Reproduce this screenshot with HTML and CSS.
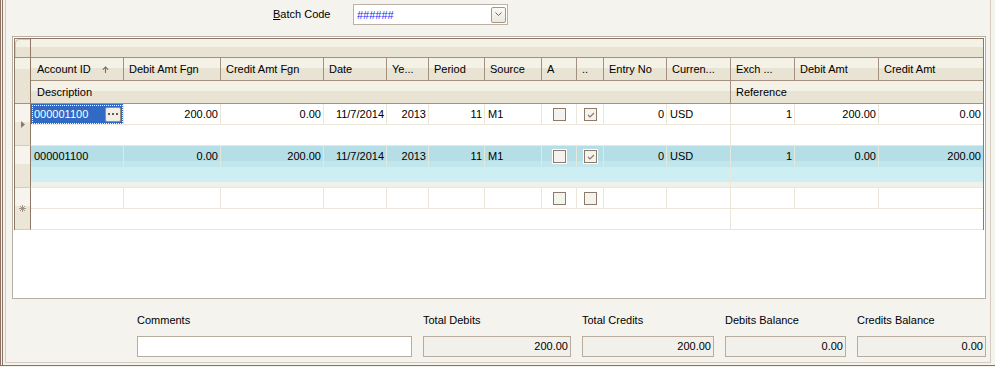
FILE: index.html
```html
<!DOCTYPE html>
<html lang="en">
<head>
    <meta charset="UTF-8">
    <title>Journal Entry</title>
    <link rel="stylesheet" href="styles.css">
</head>
<body>
  <div class="window">
    <div class="panel">
      <div class="topbar">
        <label class="batch-label" for="batch"><u>B</u>atch Code</label>
        <div class="combo" id="batch">
          <span class="combo-text">######</span>
          <span class="combo-btn">
            <svg width="7" height="5" viewBox="0 0 7 5"><polyline points="0.5,0.5 3.5,3.5 6.5,0.5" fill="none" stroke="#6f6254" stroke-width="1"/></svg>
          </span>
        </div>
      </div>

      <div class="grid-frame">
        <div class="grid">
          <!-- header -->
          <div class="cols head">
            <div class="band-sel"></div>
            <div class="band"></div>
            <div class="head-sel"></div>
            <div class="hcell">Account ID
              <svg class="sort" width="7" height="7" viewBox="0 0 7 7"><path d="M3.5 1 V7 M0.8 3.7 L3.5 1 L6.2 3.7" fill="none" stroke="#7d6d60" stroke-width="1.1"/></svg>
            </div>
            <div class="hcell">Debit Amt Fgn</div>
            <div class="hcell">Credit Amt Fgn</div>
            <div class="hcell">Date</div>
            <div class="hcell">Ye...</div>
            <div class="hcell">Period</div>
            <div class="hcell">Source</div>
            <div class="hcell">A</div>
            <div class="hcell">..</div>
            <div class="hcell">Entry No</div>
            <div class="hcell">Curren...</div>
            <div class="hcell">Exch ...</div>
            <div class="hcell">Debit Amt</div>
            <div class="hcell last">Credit Amt</div>
            <div class="hcell desc">Description</div>
            <div class="hcell ref last">Reference</div>
          </div>

          <!-- record 1 (current) -->
          <div class="cols rec">
            <div class="rsel">
              <svg width="4" height="7" viewBox="0 0 4 7"><polygon points="0,0 4,3.5 0,7" fill="#8a7a6c"/></svg>
            </div>
            <div class="cell focus">000001100
              <span class="dots-btn"><i></i><i></i><i></i></span>
            </div>
            <div class="cell num">200.00</div>
            <div class="cell num">0.00</div>
            <div class="cell num">11/7/2014</div>
            <div class="cell num">2013</div>
            <div class="cell num">11</div>
            <div class="cell txt">M1</div>
            <div class="cell chk"><span class="box"></span></div>
            <div class="cell chk"><span class="box"><svg width="11" height="11" viewBox="0 0 11 11"><polyline points="3,6 5,8 9,4" fill="none" stroke="#8e7a6a" stroke-width="1.2"/></svg></span></div>
            <div class="cell num">0</div>
            <div class="cell txt">USD</div>
            <div class="cell num">1</div>
            <div class="cell num">200.00</div>
            <div class="cell num last">0.00</div>
            <div class="cell desc"></div>
            <div class="cell ref last"></div>
          </div>

          <!-- record 2 (highlighted) -->
          <div class="cols rec hl">
            <div class="rsel"></div>
            <div class="cell txt">000001100</div>
            <div class="cell num">0.00</div>
            <div class="cell num">200.00</div>
            <div class="cell num">11/7/2014</div>
            <div class="cell num">2013</div>
            <div class="cell num">11</div>
            <div class="cell txt">M1</div>
            <div class="cell chk"><span class="box"></span></div>
            <div class="cell chk"><span class="box"><svg width="11" height="11" viewBox="0 0 11 11"><polyline points="3,6 5,8 9,4" fill="none" stroke="#8e7a6a" stroke-width="1.2"/></svg></span></div>
            <div class="cell num">0</div>
            <div class="cell txt">USD</div>
            <div class="cell num">1</div>
            <div class="cell num">0.00</div>
            <div class="cell num last">200.00</div>
            <div class="cell desc"></div>
            <div class="cell ref last"></div>
          </div>

          <!-- record 3 (new row) -->
          <div class="cols rec">
            <div class="rsel">
              <svg width="7" height="7" viewBox="0 0 7 7"><path d="M3.5 0 V7 M0 3.5 H7 M1 1 L6 6 M6 1 L1 6" fill="none" stroke="#9c8c7e" stroke-width="0.9"/></svg>
            </div>
            <div class="cell"></div>
            <div class="cell"></div>
            <div class="cell"></div>
            <div class="cell"></div>
            <div class="cell"></div>
            <div class="cell"></div>
            <div class="cell"></div>
            <div class="cell chk"><span class="box"></span></div>
            <div class="cell chk"><span class="box"></span></div>
            <div class="cell"></div>
            <div class="cell"></div>
            <div class="cell"></div>
            <div class="cell"></div>
            <div class="cell last"></div>
            <div class="cell desc"></div>
            <div class="cell ref last"></div>
          </div>
        </div>
      </div>

      <div class="footer">
        <div class="field w-comments">
          <span class="field-label">Comments</span>
          <div class="field-box white"></div>
        </div>
        <div class="field w-tdebit">
          <span class="field-label">Total Debits</span>
          <div class="field-box">200.00</div>
        </div>
        <div class="field w-tcredit">
          <span class="field-label">Total Credits</span>
          <div class="field-box">200.00</div>
        </div>
        <div class="field w-dbal">
          <span class="field-label">Debits Balance</span>
          <div class="field-box">0.00</div>
        </div>
        <div class="field w-cbal">
          <span class="field-label">Credits Balance</span>
          <div class="field-box">0.00</div>
        </div>
      </div>
    </div>
  </div>
</body>
</html>
```

FILE: styles.css
```css
* {
  box-sizing: border-box;
}

body {
  margin: 0;
  background: #f4f3ee;
  font-family: "Liberation Sans", Arial, sans-serif;
  font-size: 11px;
  color: #000;
}

.window {
  height: 366px;
  border-left: 3px double #8b7262;
  border-bottom: 1px solid #8b7262;
}

.panel {
  height: 363px;
  margin: 0 4px 0 2px;
  border: 1px solid #d4ccc1;
  border-top: none;
}

/* top bar */
.topbar {
  height: 36px;
  display: flex;
  align-items: flex-start;
  padding-left: 267px;
}

.batch-label {
  width: 80px;
  margin-top: 8px;
  line-height: 13px;
}

.combo {
  width: 155px;
  height: 21px;
  margin-top: 4px;
  border: 1px solid #bcb1a5;
  background: #fff;
  display: flex;
  align-items: center;
  padding-left: 3px;
}

.combo-text {
  color: #2323ff;
}

.combo-btn {
  margin-left: auto;
  margin-right: 1px;
  width: 15px;
  height: 16px;
  border: 1px solid #a3978b;
  border-radius: 2px;
  background: linear-gradient(#fbfaf6, #ece8dd);
  display: flex;
  align-items: center;
  justify-content: center;
}

/* grid */
.grid-frame {
  height: 263px;
  margin: 0 4px 0 6px;
  border: 1px solid #b9aea3;
  background: #fff;
  padding: 1px;
}

.grid {
  border: 1px solid #8d7867;
  border-bottom: none;
}

.cols {
  display: grid;
  grid-template-columns: 16px 93px 97px 103px 63px 42px 56px 57px 35px 27px 63px 64px 64px 84px 104px;
}

.head {
  grid-template-rows: 19px 23px 23px;
}

.band-sel {
  grid-column: 1;
  grid-row: 1;
  border-right: 1px solid #8d7867;
  border-bottom: 1px solid #a4907e;
  border-top-left-radius: 4px;
  box-shadow: inset 1px 1px 0 #d2c9bb;
  background: linear-gradient(#f4f1e7 0, #f4f1e7 45%, #e9e3d3 45%);
}

.band {
  grid-column: 2 / -1;
  grid-row: 1;
  border-bottom: 1px solid #a4907e;
  background: linear-gradient(#f4f1e7 0, #f4f1e7 45%, #e9e3d3 45%);
}

.head-sel {
  grid-column: 1;
  grid-row: 2 / span 2;
  border-right: 1px solid #8d7867;
  border-bottom: 1px solid #a4907e;
  background: linear-gradient(#f4f1e7 0, #f4f1e7 25%, #e9e3d3 25%);
}

.hcell {
  grid-row: 2;
  display: flex;
  align-items: center;
  padding-left: 5px;
  border-right: 1px solid #a4907e;
  border-bottom: 1px solid #a4907e;
  background: linear-gradient(#f4f1e7 0, #f4f1e7 45%, #e9e3d3 45%);
  white-space: nowrap;
  overflow: hidden;
}

.hcell:nth-child(4) {
  padding-left: 6px;
}

.hcell.desc {
  grid-row: 3;
  grid-column: 2 / span 11;
  padding-left: 6px;
}

.hcell.ref {
  grid-row: 3;
  grid-column: 13 / span 3;
}

.hcell.last {
  border-right: none;
}

.sort {
  margin-left: 11px;
}

/* records */
.rec {
  grid-template-rows: 21px 21px;
}

.rsel {
  grid-column: 1;
  grid-row: 1 / span 2;
  border-right: 1px solid #8d7867;
  border-bottom: 1px solid #d4cbbd;
  background: linear-gradient(#f6f4ec 0, #f6f4ec 45%, #ebe6d8 45%);
  display: flex;
  align-items: center;
  justify-content: center;
}

.cell {
  grid-row: 1;
  border-right: 1px solid #ebe6d8;
  border-bottom: 1px solid #ebe6d8;
  line-height: 20px;
  white-space: nowrap;
  overflow: hidden;
}

.cell.last {
  border-right: none;
}

.cell.desc {
  grid-row: 2;
  grid-column: 2 / span 11;
}

.cell.ref {
  grid-row: 2;
  grid-column: 13 / span 3;
}

.txt {
  padding-left: 3px;
}

.num {
  text-align: right;
  padding-right: 2px;
}

.chk {
  display: flex;
  align-items: center;
  justify-content: center;
}

.box {
  width: 13px;
  height: 13px;
  border: 1px solid #8e7a6a;
  background: #f4f3ee;
  display: flex;
}

.focus {
  background: #316ac5;
  color: #fff;
  outline: 1px dotted #fff;
  outline-offset: -2px;
  display: flex;
  align-items: center;
  padding-left: 3px;
}

.dots-btn {
  margin-left: auto;
  margin-right: 2px;
  width: 16px;
  height: 15px;
  border: 1px solid #9c8c7c;
  border-radius: 2px;
  background: #f2efe6;
  display: flex;
  align-items: center;
  justify-content: center;
  gap: 2px;
}

.dots-btn i {
  width: 2px;
  height: 2px;
  background: #6b5a4c;
}

/* highlighted record */
.hl .cell {
  background: linear-gradient(#b6dee7 0, #b6dee7 75%, #c1e6ed 75%);
  border-right-color: #e2e8dc;
  border-bottom-color: #c1e6ed;
}

.hl .cell.desc,
.hl .cell.ref {
  background: linear-gradient(#cdeff4 0, #cdeff4 15px, #f1f1ec 15px);
  border-bottom-color: #ebe6d8;
  border-right-color: #ebe6d8;
}

.hl .box {
  box-shadow: 0 0 0 1px #fff;
}

/* footer */
.footer {
  display: flex;
  gap: 11px;
  padding: 15px 0 0 131px;
}

.field {
  display: flex;
  flex-direction: column;
  gap: 9px;
}

.field-label {
  line-height: 13px;
  white-space: nowrap;
}

.field-box {
  height: 21px;
  border: 1px solid #b8ac9f;
  background: #f1f0ea;
  text-align: right;
  padding-right: 2px;
  line-height: 19px;
}

.field-box.white {
  background: #fff;
}

.w-comments { width: 275px; }
.w-tdebit { width: 148px; }
.w-tcredit { width: 132px; }
.w-dbal { width: 121px; }
.w-cbal { width: 129px; }
```
